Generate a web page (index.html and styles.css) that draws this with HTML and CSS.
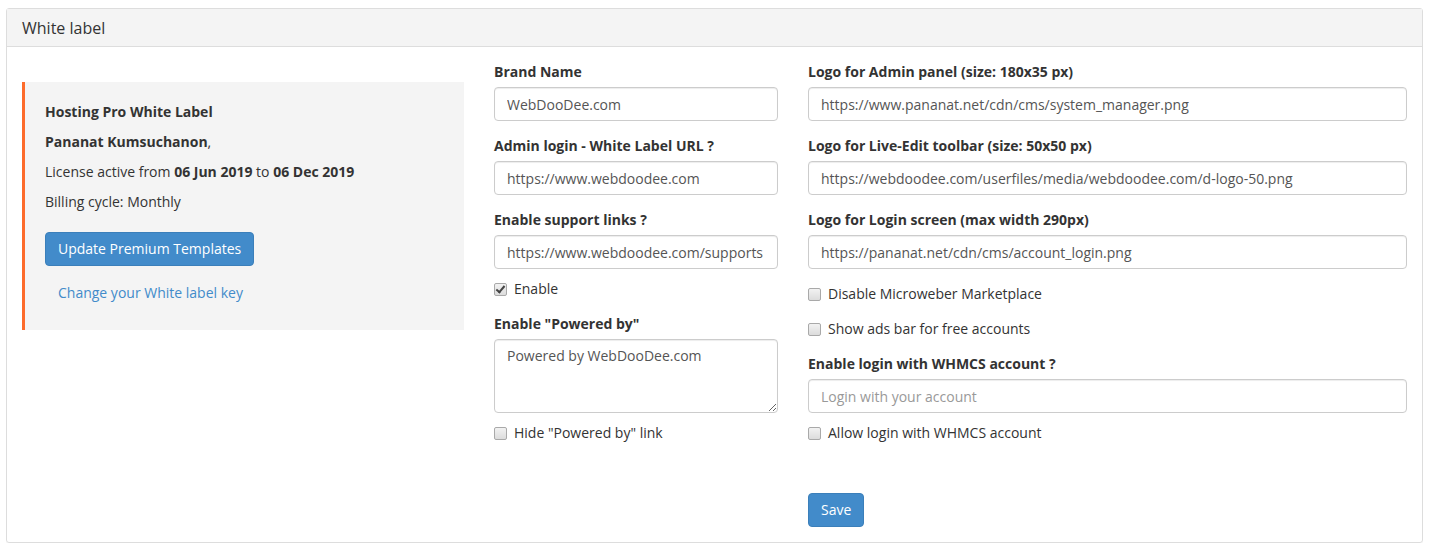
FILE: index.html
```html
<html>
  <head>
    <title>White label</title>
    <link rel="stylesheet" href="styles.css">
  </head>

  <body>
    <div class="panel">
      <div class="panel-heading">White label</div>

      <div class="panel-body">
        <aside class="license">
          <p><b>Hosting Pro White Label</b></p>
          <p><b>Pananat Kumsuchanon</b>,</p>
          <p>License active from <b>06 Jun 2019</b> to <b>06 Dec 2019</b></p>
          <p>Billing cycle: Monthly</p>
          <button class="btn btn-primary update">Update Premium Templates</button>
          <a class="btn-link" href="#">Change your White label key</a>
        </aside>

        <form class="settings">
          <div class="col-small">
            <div class="form-group">
              <label>Brand Name</label>
              <input type="text" value="WebDooDee.com">
            </div>
            <div class="form-group">
              <label>Admin login - White Label URL ?</label>
              <input type="text" value="https://www.webdoodee.com">
            </div>
            <div class="form-group">
              <label>Enable support links ?</label>
              <input type="text" value="https://www.webdoodee.com/supports">
              <label class="checkbox"><input type="checkbox" checked> Enable</label>
            </div>
            <div class="form-group">
              <label>Enable "Powered by"</label>
              <textarea>Powered by WebDooDee.com</textarea>
              <label class="checkbox"><input type="checkbox"> Hide "Powered by" link</label>
            </div>
          </div>

          <div class="col-wide">
            <div class="form-group">
              <label>Logo for Admin panel (size: 180x35 px)</label>
              <input type="text" value="https://www.pananat.net/cdn/cms/system_manager.png">
            </div>
            <div class="form-group">
              <label>Logo for Live-Edit toolbar (size: 50x50 px)</label>
              <input type="text" value="https://webdoodee.com/userfiles/media/webdoodee.com/d-logo-50.png">
            </div>
            <div class="form-group last-logo">
              <label>Logo for Login screen (max width 290px)</label>
              <input type="text" value="https://pananat.net/cdn/cms/account_login.png">
            </div>

            <label class="checkbox marketplace"><input type="checkbox"> Disable Microweber Marketplace</label>
            <label class="checkbox ads"><input type="checkbox"> Show ads bar for free accounts</label>

            <div class="form-group whmcs">
              <label>Enable login with WHMCS account ?</label>
              <input type="text" placeholder="Login with your account">
              <label class="checkbox"><input type="checkbox"> Allow login with WHMCS account</label>
            </div>

            <button class="btn btn-primary save" type="button">Save</button>
          </div>
        </form>
      </div>
    </div>
  </body>
</html>
```

FILE: styles.css
```css
body {
  margin: 8px 6px;
  font-family: "Open Sans", "Liberation Sans", sans-serif;
  font-size: 14px;
  line-height: 20px;
  color: #333;
  background: #fff;
}

.panel {
  border: 1px solid #ddd;
  border-radius: 3px;
  box-shadow: 0 1px 1px rgba(0, 0, 0, 0.05);
}

.panel-heading {
  background-color: #f4f4f4;
  border-bottom: 1px solid #ddd;
  padding: 9px 15px 8px;
  font-size: 16px;
  line-height: 20px;
}

.panel-body {
  display: flex;
  gap: 30px;
  padding: 15px;
}

.btn {
  font-family: inherit;
  font-size: 14px;
  line-height: 20px;
  padding: 6px 12px;
  border-radius: 4px;
  border: 1px solid transparent;
  cursor: pointer;
}

.btn-primary {
  background-color: #428bca;
  border-color: #3b7fba;
  color: #fff;
}

.btn-link {
  color: #428bca;
  text-decoration: none;
}

.license {
  flex: 0 0 442px;
  box-sizing: border-box;
  margin-top: 20px;
  align-self: flex-start;
  background-color: #f4f4f4;
  border-left: 3px solid #fd6b2b;
  padding: 20px 20px 19px;

  & p {
    margin: 0 0 10px;
  }

  & .update {
    display: block;
    margin-top: 20px;
  }

  & .btn-link {
    display: block;
    padding: 7px 13px 8px;
    margin-top: 10px;
  }
}

.settings {
  flex: 1;
  display: flex;
  gap: 30px;
  margin: 0;

  & .col-small {
    flex: 0 0 284px;
  }

  & .col-wide {
    flex: 1;
  }
}

.form-group {
  margin-bottom: 15px;

  & > label {
    display: block;
    font-weight: bold;
    margin-bottom: 5px;
  }
}

input[type="text"],
textarea {
  display: block;
  box-sizing: border-box;
  width: 100%;
  height: 34px;
  padding: 6px 12px;
  font-family: inherit;
  font-size: 14px;
  line-height: 20px;
  color: #555;
  background: #fff;
  border: 1px solid #ccc;
  border-radius: 4px;
  box-shadow: inset 0 1px 1px rgba(0, 0, 0, 0.075);
}

input::placeholder {
  color: #999;
}

textarea {
  height: 74px;
  resize: vertical;
}

.form-group > label.checkbox,
.checkbox {
  display: flex;
  align-items: center;
  gap: 7px;
  font-weight: normal;
  margin: 10px 0 0;

  & input {
    appearance: none;
    position: relative;
    width: 13px;
    height: 13px;
    margin: 0;
    border: 1px solid #a9a9a9;
    border-radius: 2px;
    background: linear-gradient(#f2f2f2, #dcdcdc);
  }

  & input:checked::after {
    content: "";
    position: absolute;
    left: 3px;
    top: 0px;
    width: 3px;
    height: 7px;
    border: solid #444;
    border-width: 0 2px 2px 0;
    transform: rotate(40deg);
  }
}

.last-logo {
  margin-bottom: 0;
}

.checkbox.marketplace {
  margin-top: 15px;
}

.checkbox.ads {
  margin-top: 15px;
}

.whmcs {
  margin-top: 15px;
}

.save {
  margin-top: 35px;
}
```
